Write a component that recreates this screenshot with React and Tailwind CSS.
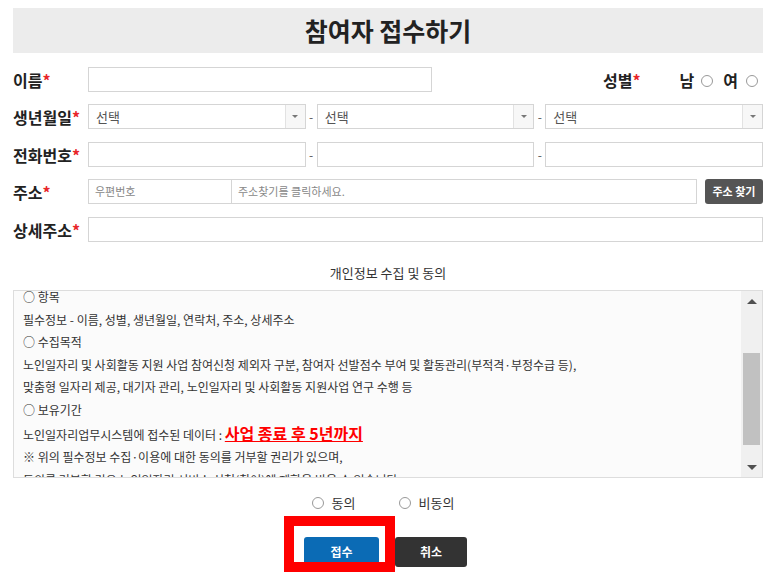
import React from 'react';

const font = { fontFamily: '"Noto Sans CJK KR", "Noto Sans", sans-serif' };

const Label = ({ children }) => (
  <div className="w-[75px] shrink-0 text-[16px] font-bold text-[#222] leading-none whitespace-nowrap">
    {children}
    <span className="text-[#e8262a]">*</span>
  </div>
);

const Radio = () => (
  <span className="inline-block w-[12px] h-[12px] rounded-full border border-[#999] bg-white" />
);

const Select = () => (
  <div className="flex-1 flex h-[25px] border border-[#d5d5d5] bg-white">
    <div className="flex-1 pl-[7px] text-[13px] text-[#555] leading-[23px]">선택</div>
    <div className="w-[20px] border-l border-[#e2e2e2] bg-[#f7f7f7] flex items-center justify-center">
      <span className="block w-0 h-0 border-l-[3px] border-r-[3px] border-t-[3px] border-l-transparent border-r-transparent border-t-[#777]" />
    </div>
  </div>
);

const Dash = () => (
  <div className="w-[11px] text-center text-[12px] text-[#555] leading-none">-</div>
);

const Input = ({ className = '', placeholder }) => (
  <div className={`h-[25px] border border-[#d5d5d5] bg-white pl-[6px] text-[11px] text-[#888] leading-[23px] ${className}`}>
    {placeholder}
  </div>
);

const App = () => {
  return (
    <div className="bg-white min-h-[573px] overflow-hidden" style={font}>
      <div className="ml-[13px] w-[750px] pt-[8px]">
        {/* Header */}
        <div className="h-[45px] bg-[#ececec] flex items-center justify-center">
          <h1 className="text-[25px] font-bold text-[#222] leading-none">참여자 접수하기</h1>
        </div>

        {/* 이름 / 성별 */}
        <div className="mt-[14px] flex items-center">
          <Label>이름</Label>
          <Input className="w-[344px]" />
          <div className="ml-[171px] text-[16px] font-bold text-[#222] leading-none">
            성별<span className="text-[#e8262a]">*</span>
          </div>
          <div className="ml-auto mr-[5px] flex items-center text-[16px] font-bold text-[#222] leading-none">
            <span>남</span>
            <span className="ml-[7px]"><Radio /></span>
            <span className="ml-[10px]">여</span>
            <span className="ml-[8px]"><Radio /></span>
          </div>
        </div>

        {/* 생년월일 */}
        <div className="mt-[12px] flex items-center">
          <Label>생년월일</Label>
          <div className="flex-1 flex items-center">
            <Select />
            <Dash />
            <Select />
            <Dash />
            <Select />
          </div>
        </div>

        {/* 전화번호 */}
        <div className="mt-[13px] flex items-center">
          <Label>전화번호</Label>
          <div className="flex-1 flex items-center">
            <Input className="flex-1" />
            <Dash />
            <Input className="flex-1" />
            <Dash />
            <Input className="flex-1" />
          </div>
        </div>

        {/* 주소 */}
        <div className="mt-[12px] flex items-center">
          <Label>주소</Label>
          <Input className="w-[144px]" placeholder="우편번호" />
          <Input className="w-[466px] ml-[-1px]" placeholder="주소찾기를 클릭하세요." />
          <button className="ml-auto w-[58px] h-[25px] rounded-[3px] bg-[#555] text-white text-[11px] font-bold leading-none">
            주소 찾기
          </button>
        </div>

        {/* 상세주소 */}
        <div className="mt-[13px] flex items-center">
          <Label>상세주소</Label>
          <Input className="flex-1" />
        </div>

        {/* 개인정보 */}
        <div className="mt-[24px] text-center text-[13px] text-[#333] leading-none">개인정보 수집 및 동의</div>

        <div className="mt-[11px] h-[188px] border border-[#ddd] bg-[#fbfbfb] flex overflow-hidden">
          <div className="flex-1 overflow-hidden pl-[9px]">
            <div className="mt-[-5px] text-[12px] text-[#333] leading-[22.6px] whitespace-nowrap">
              <p>○ 항목</p>
              <p>필수정보 - 이름, 성별, 생년월일, 연락처, 주소, 상세주소</p>
              <p>○ 수집목적</p>
              <p>노인일자리 및 사회활동 지원 사업 참여신청 제외자 구분, 참여자 선발점수 부여 및 활동관리(부적격·부정수급 등),</p>
              <p>맞춤형 일자리 제공, 대기자 관리, 노인일자리 및 사회활동 지원사업 연구 수행 등</p>
              <p>○ 보유기간</p>
              <p>
                노인일자리업무시스템에 접수된 데이터 :{' '}
                <span className="text-[16px] font-bold text-[#f00] underline">사업 종료 후 5년까지</span>
              </p>
              <p>※ 위의 필수정보 수집·이용에 대한 동의를 거부할 권리가 있으며,</p>
              <p>동의를 거부할 경우 노인일자리 서비스 신청(참여)에 제한을 받을 수 있습니다.</p>
            </div>
          </div>
          {/* scrollbar */}
          <div className="w-[21px] bg-[#f0f0f0] flex flex-col items-center">
            <div className="h-[20px] flex items-center justify-center">
              <span className="block w-0 h-0 border-l-[5px] border-r-[5px] border-b-[5px] border-l-transparent border-r-transparent border-b-[#505050]" />
            </div>
            <div className="mt-[42px] w-[17px] h-[92px] bg-[#c1c1c1]" />
            <div className="mt-auto h-[20px] flex items-center justify-center">
              <span className="block w-0 h-0 border-l-[5px] border-r-[5px] border-t-[5px] border-l-transparent border-r-transparent border-t-[#505050]" />
            </div>
          </div>
        </div>

        {/* 동의 */}
        <div className="mt-[18px] flex items-center justify-center text-[13px] text-[#333] leading-none">
          <div className="flex items-center ml-[-10px]">
            <Radio />
            <span className="ml-[8px]">동의</span>
          </div>
          <div className="flex items-center ml-[43px]">
            <Radio />
            <span className="ml-[8px]">비동의</span>
          </div>
        </div>

        {/* Buttons */}
        <div className="mt-[28px] flex justify-center ml-[-5px]">
          <div className="relative flex">
            <button className="w-[75px] h-[30px] rounded-[3px] bg-[#0b6bb5] text-white text-[12px] font-bold leading-none">
              접수
            </button>
            <button className="ml-[16px] w-[72px] h-[30px] rounded-[3px] bg-[#333] text-white text-[12px] font-bold leading-none">
              취소
            </button>
            <div className="absolute left-[-20px] top-[-21px] w-[111px] h-[56px] border-[10px] border-[#f00] pointer-events-none" />
          </div>
        </div>
      </div>
    </div>
  );
};

export default App;
